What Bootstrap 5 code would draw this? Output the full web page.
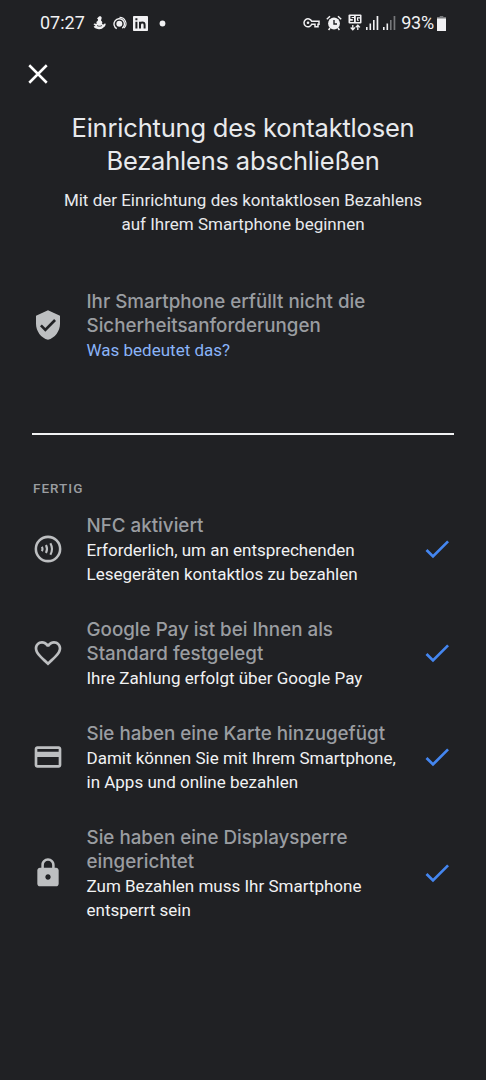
<!DOCTYPE html>
<html lang="de">
<head>
<meta charset="utf-8">
<meta name="viewport" content="width=device-width, initial-scale=1">
<title>Kontaktloses Bezahlen</title>
<link href="https://cdn.jsdelivr.net/npm/bootstrap@5.3.0/dist/css/bootstrap.min.css" rel="stylesheet">
<style>
  body { background: #202124; color: #e8eaed; font-family: Roboto, "Liberation Sans", sans-serif; font-size: 17px; line-height: 24px; min-height: 1080px; overflow-x: hidden; }
  svg { display: block; flex: none; }
  .status-bar { height: 46px; padding: 0 40px 0 40px; font-size: 18px; color: #f1f1f3; }
  .close-btn { padding: 13px 0 0 23px; height: 56px; color: #fff; line-height: 0; }
  .page-title { font-family: Inter, Roboto, sans-serif; font-size: 25.5px; line-height: 33px; font-weight: 400; margin: 9px 0 11px; letter-spacing: -.2px; }
  .step { padding: 16px 0; }
  .step-icon { width: 32px; margin-right: 22.500px; color: #bdbfc1; }
  .step-body { margin: 1px 0 -1px; }
  .step-title { font-family: Inter, Roboto, sans-serif; font-size: 18.8px; line-height: 24px; font-weight: 500; color: #9a9da1; margin: 0; letter-spacing: 0; }
  .step-text { color: #f1f2f3; margin: 0; }
  .step-link { color: #8ab4f8; text-decoration: none; }
  .rule { height: 2px; background: #f1f2f3; margin: 56px 32px 0; }
  .section-label { font-size: 13.5px; line-height: 20px; font-weight: 500; letter-spacing: 1px; color: #9a9da1; margin: 43px 0 0; padding-left: 33px; }
  .steps { padding: 0 33px 0 32px; }
  .steps-done { margin-top: -1px; }
</style>
</head>
<body>
<header class="status-bar d-flex align-items-center justify-content-between">
  <div class="d-flex align-items-center">
    <span>07:27</span>
    <svg class="ms-2" width="13" height="14" viewBox="0 0 13 14" fill="#f1f1f3"><path d="M6 .5C7.5-.3 9 .8 8.6 2.3L8 4.5c1.3.8 1.7 2.3.8 3.6l1.7.4 1.5-1.2.7.7c-.2 1.500-.8 2.600-2 3.300-1.200 1.500-3 2.200-5 1.900C3 13 1 12 .7 10.300L2.600 10 .5 8.300l.8-.8 2.500.4C3 6.500 3.500 5.500 4.800 4.800L5 3.200 4 2.600z"/><path d="M4 9.500c1.500 1 3.500 1 5 0" fill="none" stroke="#202124" stroke-width=".8"/></svg>
    <svg style="margin-left:7px" width="14" height="15" viewBox="0 0 15 15" fill="none" stroke="#f1f1f3"><circle cx="6.800" cy="7.800" r="3.200" fill="#f1f1f3" stroke="none"/><path d="M4 12.900A5.600 5.600 0 1 1 10 12.500" stroke-width="1.500"/><path d="M7 .9a6.800 6.800 0 0 1 5 11.500" stroke-width="1.200"/></svg>
    <svg style="margin-left:6px" width="15" height="15" viewBox="0 0 15 15"><rect width="15" height="15" rx=".8" fill="#f1f1f3"/><g fill="none" stroke="#202124" stroke-width="2"><path d="M3.400 5.700v6.800M3.400 2.300v2M7 5.700v6.800M7 9c0-3.200 4.600-3.200 4.600 0v3.500"/></g></svg>
    <svg style="margin-left:11px" width="7" height="7"><circle cx="3.500" cy="3.500" r="2.900" fill="#f1f1f3"/></svg>
  </div>
  <div class="d-flex align-items-center">
    <svg width="18" height="12" viewBox="0 0 18 12" fill="none" stroke="#f1f1f3"><path d="M8.700 4.300H16v3h-1v2.400h-3V7.300H8.700A4 4 0 1 1 8.700 4.300z" stroke-width="1.500"/><circle cx="5" cy="5.800" r="1.300" fill="#f1f1f3" stroke="none"/></svg>
    <svg style="margin-left:5px" width="16" height="16" viewBox="0 0 16 16"><circle cx="8" cy="8.500" r="5.900" fill="#f1f1f3"/><path d="M.8 4.200L4 1.300M15.200 4.200L12 1.300M4 13l-1.400 2M12 13l1.400 2" stroke="#f1f1f3" stroke-width="1.500"/><path d="M8 5v4h3" fill="none" stroke="#202124" stroke-width="1.400"/></svg>
    <svg style="margin-left:6px;margin-top:-2px" width="14" height="17" viewBox="0 0 14 17"><rect x=".5" y=".5" width="13" height="9" rx="1" fill="#f1f1f3"/><g fill="none" stroke="#202124" stroke-width="1.200"><path d="M6 2.500H3v2h2.400v2.800H2.200M12 2.600H8.400v4.700h3V5.200H10"/></g><path d="M4.800 11v4.500M2.700 13.500l2.100 2.200 2.100-2.200M9.800 16v-4.500M7.700 13.400l2.100-2.200 2.100 2.200" fill="none" stroke="#f1f1f3" stroke-width="1.300"/></svg>
    <svg style="margin-left:4px" width="13" height="14" viewBox="0 0 13 14" fill="#f1f1f3"><path d="M0 11h1.600v3H0zM3.500 7.500h1.600V14H3.500zM7 4h1.600v10H7zM10.600 0h1.700v14h-1.700z"/></svg>
    <svg style="margin-left:4px" width="13" height="14" viewBox="0 0 13 14" fill="#f1f1f3"><path d="M0 11h1.600v3H0zM3.500 7.500h1.600V14H3.500z"/><path d="M7 4h1.600v10H7zM10.600 0h1.700v14h-1.700z" fill="#77787b"/></svg>
    <span style="margin-left:5px;letter-spacing:-.2px">93%</span>
    <svg style="margin-left:3px" width="9" height="15" viewBox="0 0 10 15" preserveAspectRatio="none"><path d="M3 0h4v1h3v3H0V1h3z" fill="#77787b"/><path d="M0 2.500h10V15H0z" fill="#f1f1f3"/></svg>
  </div>
</header>
<div class="close-btn"><svg width="30" height="30" viewBox="0 0 24 24" fill="none" stroke="currentColor" stroke-width="2"><path d="M5 5l14 14M19 5L5 19"/></svg></div>
<main>
  <div class="text-center">
    <h1 class="page-title">Einrichtung des kontaktlosen<br>Bezahlens abschließen</h1>
    <p class="m-0">Mit der Einrichtung des kontaktlosen Bezahlens<br>auf Ihrem Smartphone beginnen</p>
  </div>
  <div class="steps" style="padding-top:37px">
    <div class="step d-flex align-items-center">
      <div class="step-icon"><svg width="32" height="32" viewBox="0 0 24 24" fill="currentColor"><path d="M12 1L3 5v6c0 5.550 3.840 10.740 9 12 5.160-1.260 9-6.450 9-12V5l-9-4zm-2 16l-4-4 1.410-1.410L10 14.170l6.590-6.590L18 9l-8 8z"/></svg></div>
      <div class="step-body"><h2 class="step-title">Ihr Smartphone erfüllt nicht die<br>Sicherheitsanforderungen</h2><p class="step-text"><a class="step-link" href="#">Was bedeutet das?</a></p></div>
    </div>
  </div>
  <div class="rule"></div>
  <p class="section-label">FERTIG</p>
  <div class="steps steps-done">
    <div class="step d-flex align-items-center">
      <div class="step-icon"><svg width="32" height="32" viewBox="0 0 24 24" fill="none" stroke="currentColor"><circle cx="12" cy="12" r="9.100" stroke-width="1.900"/><path d="M7.500 10.300q.8 1.700 0 3.400M10.500 9q1.500 3 0 6M13.800 7.700q2.400 4.300 0 8.600" stroke-width="1.600"/></svg></div>
      <div class="step-body flex-grow-1"><h2 class="step-title">NFC aktiviert</h2><p class="step-text">Erforderlich, um an entsprechenden<br>Lesegeräten kontaktlos zu bezahlen</p></div>
      <svg width="32" height="32" viewBox="0 0 24 24" fill="#4486f0"><path d="M9 16.170L4.830 12l-1.420 1.410L9 19 21 7l-1.410-1.410z"/></svg>
    </div>
    <div class="step d-flex align-items-center">
      <div class="step-icon"><svg width="32" height="32" viewBox="0 0 24 24" fill="currentColor"><path d="M16.500 3c-1.740 0-3.410.81-4.500 2.090C10.910 3.810 9.240 3 7.500 3 4.420 3 2 5.420 2 8.500c0 3.780 3.400 6.860 8.550 11.540L12 21.350l1.450-1.320C18.600 15.360 22 12.280 22 8.500 22 5.420 19.580 3 16.500 3zm-4.400 15.550l-.1.1-.1-.1C7.140 14.240 4 11.390 4 8.500 4 6.500 5.500 5 7.500 5c1.540 0 3.040.99 3.570 2.360h1.870C13.460 5.990 14.960 5 16.500 5c2 0 3.500 1.500 3.500 3.500 0 2.890-3.140 5.740-7.900 10.050z"/></svg></div>
      <div class="step-body flex-grow-1"><h2 class="step-title">Google Pay ist bei Ihnen als<br>Standard festgelegt</h2><p class="step-text">Ihre Zahlung erfolgt über Google Pay</p></div>
      <svg width="32" height="32" viewBox="0 0 24 24" fill="#4486f0"><path d="M9 16.170L4.830 12l-1.420 1.410L9 19 21 7l-1.410-1.410z"/></svg>
    </div>
    <div class="step d-flex align-items-center">
      <div class="step-icon"><svg width="32" height="32" viewBox="0 0 24 24" fill="currentColor"><path d="M20 4H4c-1.110 0-1.990.89-1.990 2L2 18c0 1.110.89 2 2 2h16c1.110 0 2-.89 2-2V6c0-1.110-.89-2-2-2zm0 14H4v-6h16v6zm0-10H4V6h16v2z"/></svg></div>
      <div class="step-body flex-grow-1"><h2 class="step-title">Sie haben eine Karte hinzugefügt</h2><p class="step-text">Damit können Sie mit Ihrem Smartphone,<br>in Apps und online bezahlen</p></div>
      <svg width="32" height="32" viewBox="0 0 24 24" fill="#4486f0"><path d="M9 16.170L4.830 12l-1.420 1.410L9 19 21 7l-1.410-1.410z"/></svg>
    </div>
    <div class="step d-flex align-items-center">
      <div class="step-icon"><svg width="32" height="32" viewBox="0 0 24 24" fill="currentColor"><path d="M18 8h-1V6c0-2.760-2.240-5-5-5S7 3.240 7 6v2H6c-1.100 0-2 .9-2 2v10c0 1.100.9 2 2 2h12c1.100 0 2-.9 2-2V10c0-1.100-.9-2-2-2zm-6 9c-1.100 0-2-.9-2-2s.9-2 2-2 2 .9 2 2-.9 2-2 2zm3.100-9H8.900V6c0-1.710 1.390-3.100 3.100-3.100s3.100 1.390 3.100 3.100v2z"/></svg></div>
      <div class="step-body flex-grow-1"><h2 class="step-title">Sie haben eine Displaysperre<br>eingerichtet</h2><p class="step-text">Zum Bezahlen muss Ihr Smartphone<br>entsperrt sein</p></div>
      <svg width="32" height="32" viewBox="0 0 24 24" fill="#4486f0"><path d="M9 16.170L4.830 12l-1.420 1.410L9 19 21 7l-1.410-1.410z"/></svg>
    </div>
  </div>
</main>
<script src="https://cdn.jsdelivr.net/npm/bootstrap@5.3.0/dist/js/bootstrap.bundle.min.js"></script>
</body>
</html>
